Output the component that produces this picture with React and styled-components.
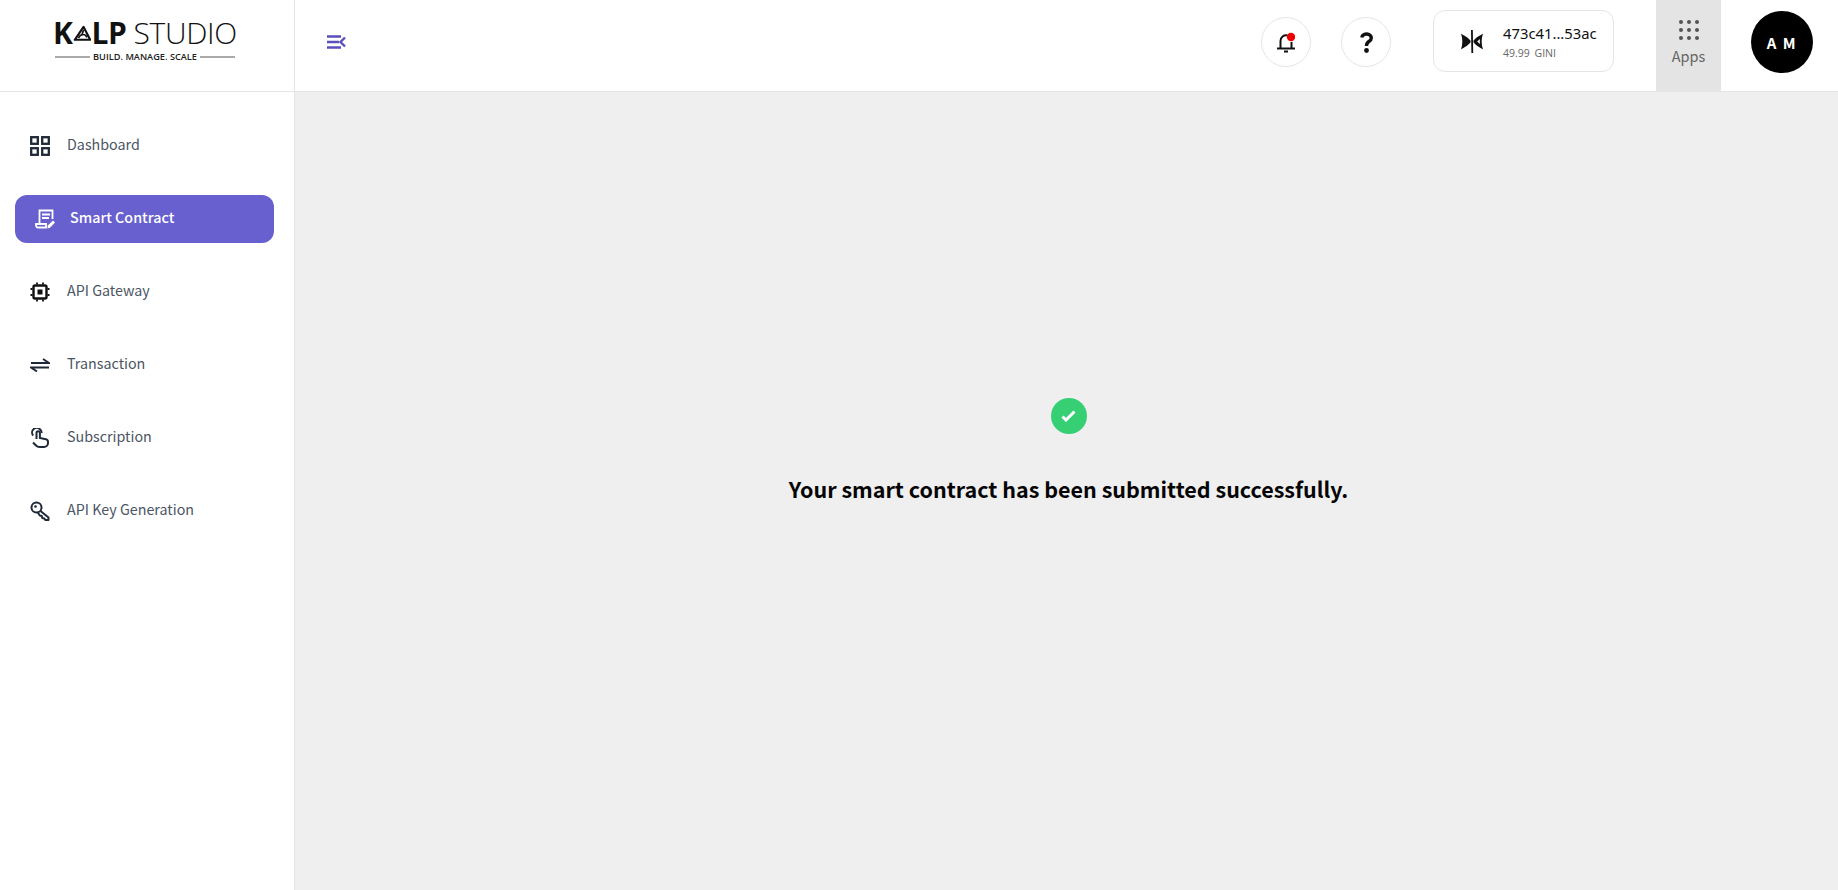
import React from "react";
import styled, { createGlobalStyle } from "styled-components";

const Global = createGlobalStyle`
  html, body { margin: 0; padding: 0; height: 100%; background: #fff; }
  body { font-family: "Noto Sans CJK SC", "Noto Sans", sans-serif; }
  * { box-sizing: border-box; }
`;
const Page = styled.div`display:flex;flex-direction:column;width:1838px;height:890px;overflow:hidden;`;
const Header = styled.header`display:flex;align-items:flex-start;height:92px;flex:none;border-bottom:1px solid #e5e5e5;background:#fff;`;
const LogoCell = styled.div`width:295px;height:91px;flex:none;border-right:1px solid #e5e5e5;padding:21px 0 0 53px;`;
const LogoRow = styled.div`display:flex;align-items:center;height:24px;width:184px;color:#111;font-family:"Open Sans",sans-serif;line-height:24px;white-space:nowrap;`;
const LogoBold = styled.span`font-size:30px;font-weight:700;letter-spacing:-0.4px;`;
const LogoThin = styled.span`font-size:30px;font-weight:300;margin-left:7px;letter-spacing:-0.3px;`;
const Tagline = styled.div`display:flex;align-items:center;gap:3px;width:180px;margin:6px 0 0 2px;font-family:"Open Sans",sans-serif;font-size:9.200px;font-weight:600;color:#222;line-height:12px;white-space:nowrap;`;
const TagRule = styled.span`flex:1;height:2px;background:#aaa;`;
const MenuToggle = styled.button`border:0;background:none;padding:0;margin:35px 0 0 32px;display:flex;color:#5a4fbd;`;
const HeaderRight = styled.div`display:flex;align-items:flex-start;margin-left:auto;height:91px;`;
const RoundButton = styled.button`width:50px;height:50px;margin-top:17px;border-radius:50%;border:1px solid #e5e5e5;background:#fff;padding:0;display:flex;align-items:center;justify-content:center;margin-right:${p=>p.$gap}px;`;
const Wallet = styled.div`width:181px;height:62px;margin-top:10px;border:1px solid #e5e5e5;border-radius:12px;display:flex;align-items:center;padding-left:27px;margin-right:42px;`;
const WalletInfo = styled.div`margin-left:20px;`;
const Address = styled.div`font-family:"Noto Sans",sans-serif;font-size:14.800px;line-height:20px;color:#111;`;
const Balance = styled.div`font-family:"Open Sans",sans-serif;font-size:10.500px;line-height:14px;margin-top:3px;color:#666;word-spacing:2px;`;
const AppsButton = styled.div`width:65px;height:91px;background:#e4e4e4;display:flex;flex-direction:column;align-items:center;padding-top:20px;margin-right:30px;`;
const DotGrid = styled.div`display:grid;grid-template-columns:repeat(3,4px);gap:4px;`;
const Dot = styled.span`width:4px;height:4px;border-radius:50%;background:#555;`;
const AppsLabel = styled.span`font-size:14.500px;line-height:20px;color:#666;margin-top:6px;`;
const Avatar = styled.div`width:62px;height:62px;margin-top:11px;border-radius:50%;background:#000;color:#fff;font-size:15px;font-weight:700;letter-spacing:1.500px;display:flex;align-items:center;justify-content:center;margin-right:25px;`;
const Body = styled.div`display:flex;flex:1;min-height:0;`;
const Sidebar = styled.nav`width:295px;flex:none;border-right:1px solid #e5e5e5;padding:30px 20px 0 15px;display:flex;flex-direction:column;gap:25px;background:#fff;`;
const NavItem = styled.div`display:flex;align-items:center;height:48px;border-radius:12px;padding-left:${p=>p.$active?"20px":"15px"};gap:${p=>p.$active?"15px":"17px"};background:${p=>p.$active?"#6860cf":"transparent"};color:${p=>p.$active?"#fff":"#4b5563"};font-size:14.300px;font-weight:${p=>p.$active?500:400};`;
const NavLabel = styled.span`line-height:20px;margin-bottom:4px;`;
const IconSlot = styled.span`display:flex;width:20px;height:20px;flex:none;color:${p=>p.$active?"#fff":"#1f2937"};`;
const Main = styled.main`flex:1;background:#efefef;display:flex;flex-direction:column;align-items:center;padding:306px 0 0 4px;`;
const SuccessBadge = styled.div`width:36px;height:36px;border-radius:50%;background:#37cf73;display:flex;align-items:center;justify-content:center;`;
const Message = styled.h1`margin:37px 0 0;font-size:21.500px;line-height:36px;font-weight:700;color:#050505;`;

const Grid = () => <svg width="20" height="20" viewBox="0 0 20 20" fill="none" stroke="currentColor" strokeWidth="2.300"><rect x="1.200" y="1.200" width="6.600" height="6.600"/><rect x="12.200" y="1.200" width="6.600" height="6.600"/><rect x="1.200" y="12.200" width="6.600" height="6.600"/><rect x="12.200" y="12.200" width="6.600" height="6.600"/></svg>;
const Contract = () => <svg width="20" height="20" viewBox="0 0 20 20" fill="none" stroke="currentColor" strokeWidth="1.800"><path d="M4.500 14V1.500h13V10"/><path d="M7 5.500h8M7 9h7" strokeWidth="2"/><path d="M1 15h10v3.500H3a2 2 0 0 1-2-2z"/><path d="M12.500 19.500l.3-3 5.200-5 2 2-5 5.200z" fill="currentColor" stroke="none"/></svg>;
const Chip = () => <svg width="20" height="20" viewBox="0 0 20 20" fill="none" stroke="#111" strokeWidth="2.400"><rect x="3.500" y="3.500" width="13" height="13" rx="1.500"/><rect x="8" y="8" width="4" height="4" fill="#111" strokeWidth="1"/><path d="M7 .5v2M13 .5v2M7 17.500v2M13 17.500v2M.5 7h2M.5 13h2M17.500 7h2M17.500 13h2" strokeWidth="1.800"/></svg>;
const Swap = () => <svg width="20" height="20" viewBox="0 0 20 20" fill="none" stroke="currentColor" strokeWidth="2"><path d="M1 8h18l-6-4"/><path d="M19 12.500H1l6 4"/></svg>;
const Pointer = () => <svg width="20" height="20" viewBox="0 0 20 20" fill="none" stroke="currentColor" strokeWidth="2"><path d="M3.200 7.500a4.500 4.500 0 0 1 7-6 4 4 0 0 1 1.300 3.500"/><path d="M6.500 11V5a1.700 1.700 0 0 1 3.400 0v5l6 1.200c1.300.3 2.100 1.100 2.100 2.500V15a4 4 0 0 1-4 4H9.500c-1.500 0-2.500-.4-3.500-1.500L3 14.500"/></svg>;
const KeyIcon = () => <svg width="20" height="20" viewBox="0 0 20 20" fill="none" stroke="currentColor" strokeWidth="2"><circle cx="6.500" cy="6.500" r="5"/><circle cx="5.500" cy="5.500" r="1.300" fill="currentColor" strokeWidth="0"/><path d="M10.500 10l8 6.500V19h-3.200l-1-1.500-2-.5-.5-2-2-.5-2.300-3.500" strokeLinejoin="round"/></svg>;

const items = [
  ["Dashboard", Grid],
  ["Smart Contract", Contract, true],
  ["API Gateway", Chip],
  ["Transaction", Swap],
  ["Subscription", Pointer],
  ["API Key Generation", KeyIcon],
];

export default function App() {
  return (
    <Page>
      <Global />
      <Header>
        <LogoCell>
          <LogoRow>
            <LogoBold>K</LogoBold>
            <svg width="27" height="23" viewBox="0 0 27 23" fill="none" stroke="#111" strokeWidth="3" strokeLinejoin="round"><path d="M15 2 2.500 20.500h22z"/><path d="M8 18c2-6 9-7 12-1M15 6l-2 7" strokeWidth="2.400"/></svg>
            <LogoBold>LP</LogoBold>
            <LogoThin>STUDIO</LogoThin>
          </LogoRow>
          <Tagline><TagRule />BUILD. MANAGE. SCALE<TagRule /></Tagline>
        </LogoCell>
        <MenuToggle aria-label="Toggle menu">
          <svg width="19" height="14" viewBox="0 0 19 14" fill="none" stroke="currentColor" strokeWidth="2.400"><path d="M0 1.500h14M0 7h12M0 12.500h14M18 2.500 13.500 7l4.500 4.500"/></svg>
        </MenuToggle>
        <HeaderRight>
          <RoundButton $gap={30} aria-label="Notifications">
            <svg width="18" height="21" viewBox="0 0 18 21" fill="none" stroke="#111" strokeWidth="2"><path d="M3.500 16V9a5.500 5.500 0 0 1 7-5.500"/><path d="M14.500 10v6"/><path d="M0 16.500h18"/><path d="M7 19.500h4"/><circle cx="14" cy="5" r="4.200" fill="#ee0000" stroke="none"/></svg>
          </RoundButton>
          <RoundButton $gap={42} aria-label="Help">
            <svg width="13" height="21" viewBox="0 0 13 21" fill="none" stroke="#111" strokeWidth="3.400"><path d="M1.700 5.500a4.800 4 0 1 1 7.500 3.800C7.500 10.500 6.500 11 6.500 14"/><circle cx="6.500" cy="18.500" r="2.400" fill="#111" stroke="none"/></svg>
          </RoundButton>
          <Wallet>
            <svg width="22" height="23" viewBox="0 0 22 23" fill="#111"><path d="M10 0h1.800l.4 23h-1.800z"/><path d="M0 3.500c2.500 2 6 3 9.500 7v2C6 16.500 2.500 17.500 0 19.500c1.800-5 1.800-11 0-16z"/><path fillRule="evenodd" d="M22 3.500c-2.500 2-6 3-9.500 7v2c3.500 4 7 5 9.500 7-1.800-5-1.800-11 0-16zM19 9c-1 .8-2 1.600-2.800 2.500.8.900 1.800 1.700 2.800 2.500-.3-1.700-.3-3.300 0-5z"/></svg>
            <WalletInfo>
              <Address>473c41...53ac</Address>
              <Balance>49.99 GINI</Balance>
            </WalletInfo>
          </Wallet>
          <AppsButton>
            <DotGrid>{Array.from({length:9},(_,i)=><Dot key={i}/>)}</DotGrid>
            <AppsLabel>Apps</AppsLabel>
          </AppsButton>
          <Avatar>A M</Avatar>
        </HeaderRight>
      </Header>
      <Body>
        <Sidebar>
          {items.map(([label, Icon, active]) => (
            <NavItem key={label} $active={active}>
              <IconSlot $active={active}><Icon /></IconSlot>
              <NavLabel>{label}</NavLabel>
            </NavItem>
          ))}
        </Sidebar>
        <Main>
          <SuccessBadge>
            <svg width="15" height="12" viewBox="0 0 15 12" fill="none" stroke="#fff" strokeWidth="3"><path d="M1.500 6.500l3.500 3.500 8.500-8.500"/></svg>
          </SuccessBadge>
          <Message>Your smart contract has been submitted successfully.</Message>
        </Main>
      </Body>
    </Page>
  );
}
